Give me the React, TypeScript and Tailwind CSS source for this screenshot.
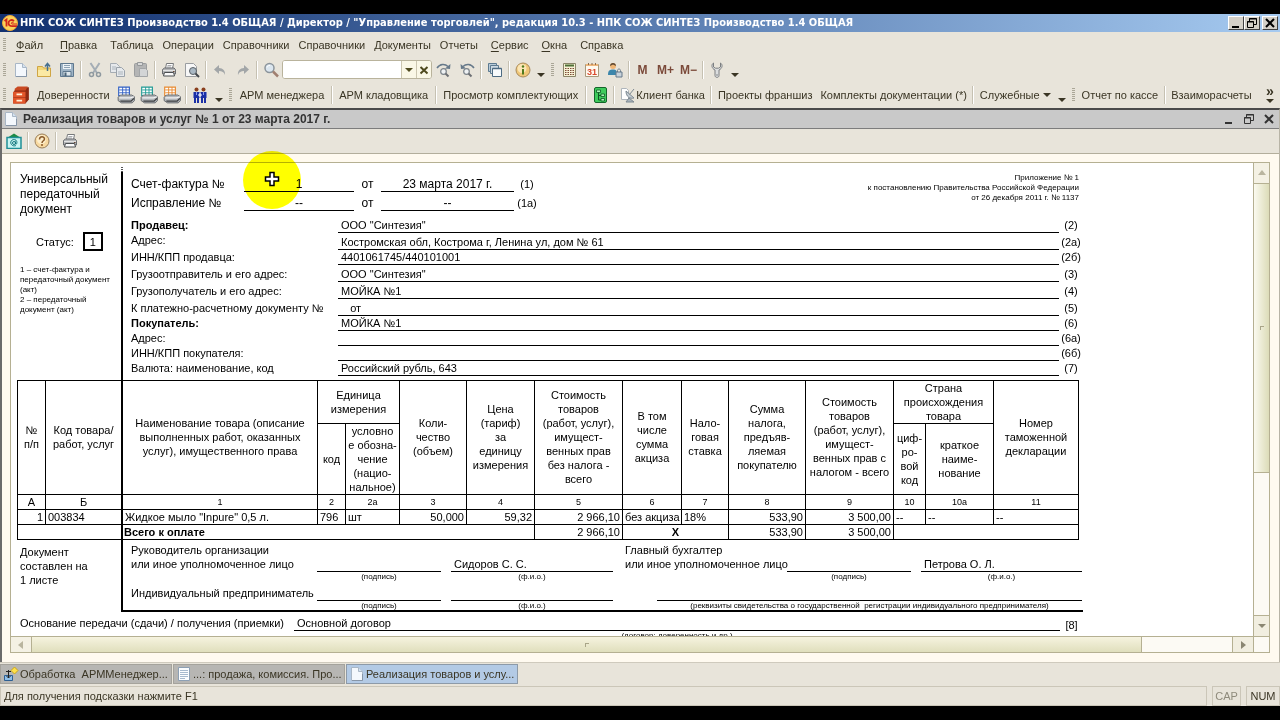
import type { ReactNode } from 'react'

type IconProps = { children: ReactNode; size?: number }

function Svg({ children, size = 16 }: IconProps) {
  return (
    <svg width={size} height={size} viewBox="0 0 16 16" fill="none" aria-hidden="true" className="shrink-0">
      {children}
    </svg>
  )
}

const PageIcon = () => (
  <Svg>
    <path d="M2.500 1.500h7l4 4v9h-11z" fill="#f4f8fd" stroke="#a9b7c6" />
    <path d="M9.500 1.500v4h4" fill="#d5e2f0" stroke="#a9b7c6" />
    <path d="M3 14.500h10.500V8" stroke="#8796a8" />
  </Svg>
)

const OpenIcon = () => (
  <Svg>
    <path d="M1.500 4.500h5l1 1.500h7v8.500h-13z" fill="#f4d878" stroke="#cfa545" />
    <path d="M2 8h12v6H2z" fill="#fbe9a4" />
    <path d="M11.500 9V2M9 4.500L11.500 1.500 14 4.500" stroke="#47708f" strokeWidth="1.500" />
  </Svg>
)

const SaveIcon = () => (
  <Svg>
    <path d="M1.500 1.500h13v13h-13z" fill="#9fb4c6" stroke="#5f788e" />
    <path d="M4 2h8v5H4z" fill="#edf3f7" />
    <path d="M5 3.500h6M5 5.500h6" stroke="#8da2b4" />
    <path d="M4 9.500h8V14H4z" fill="#dde6ec" stroke="#5f788e" />
    <path d="M5.500 10.500h2V14h-2z" fill="#4b6478" />
  </Svg>
)

const CutIcon = () => (
  <Svg>
    <path d="M3.500 1l6.500 10M12.500 1L6 11" stroke="#a4adb5" strokeWidth="2" />
    <circle cx="4.500" cy="12.500" r="2" stroke="#8f999f" strokeWidth="1.500" />
    <circle cx="11.500" cy="12.500" r="2" stroke="#8f999f" strokeWidth="1.500" />
  </Svg>
)

const CopyIcon = () => (
  <Svg>
    <path d="M.5 1.500h6l3 3v6h-9z" fill="#e6e9ec" stroke="#a5acb3" />
    <path d="M6.500 5.500h5l3 3v6h-8z" fill="#e6e9ec" stroke="#9aa2aa" />
    <path d="M2 5h4M2 7h4M8 10h5M8 12h5" stroke="#abb4bc" />
  </Svg>
)

const PasteIcon = () => (
  <Svg>
    <rect x="1.500" y="1.500" width="12" height="13" rx="1" fill="#b4b5b5" stroke="#9b9d9e" />
    <path d="M4.500 .5h5v3h-5z" fill="#d8d9d9" stroke="#95989a" />
    <path d="M6.500 6.500h6l2 2v6h-8z" fill="#d3d5d6" stroke="#a2a5a7" />
  </Svg>
)

const PrintIcon = () => (
  <Svg>
    <path d="M4.500 6.500l1-5h7l-1 5z" fill="#fff" stroke="#77797b" />
    <path d="M6.500 3.500h4M6 5h4" stroke="#a9abad" />
    <path d="M1.500 7.500l2-1.500h9.500l1.500 1.500v4.500h-13z" fill="#b3b5b7" stroke="#6a6d70" />
    <path d="M2 8.500h12" stroke="#e4e4e4" />
    <path d="M3.500 10.500h9l1 3.500h-11z" fill="#fafafa" stroke="#4b4e51" />
    <path d="M12 9.500h1.500" stroke="#6b4b37" />
  </Svg>
)

const PreviewIcon = () => (
  <Svg>
    <path d="M1.500 1.500h8l3 3v10h-11z" fill="#f7f7f7" stroke="#9a9da0" />
    <circle cx="9" cy="9" r="3.500" fill="#a9b8c4" stroke="#5b6268" />
    <path d="M11.500 11.500l3.500 3.500" stroke="#44494d" strokeWidth="2" />
  </Svg>
)

const ArrowIcon = ({ flip }: { flip?: boolean }) => (
  <Svg>
    <path
      d={flip ? 'M9 3l5 4.500-5 4.500V9C6 9 4 10 3 13c-.500-4 2-7 6-7z' : 'M7 3L2 7.500 7 12V9c3 0 5 1 6 4 .500-4-2-7-6-7z'}
      fill="#a2a6a8"
    />
  </Svg>
)

const SearchIcon = () => (
  <Svg>
    <circle cx="6.500" cy="6" r="4.500" fill="#dbe6ef" stroke="#8b949b" strokeWidth="1.500" />
    <path d="M4 5.500c.500-1.500 1.500-2 3-2" stroke="#fff" />
    <path d="M10 9.500l5 5" stroke="#a07f70" strokeWidth="2.500" />
  </Svg>
)

const FindStepIcon = ({ back }: { back?: boolean }) => (
  <Svg>
    <path d={back ? 'M15 6C12 1.500 7 1.500 4 4.500' : 'M1 6C4 1.500 9 1.500 12 4.500'} stroke="#66798a" strokeWidth="1.500" />
    <path d={back ? 'M1.500 2l.500 5 5-.500z' : 'M14.500 2l-.500 5-5-.500z'} fill="#66798a" />
    <circle cx="7.500" cy="9.500" r="2.800" fill="#eef1f3" stroke="#7b838a" strokeWidth="1.200" />
    <path d="M9.500 11.500l3 3" stroke="#6c6f73" strokeWidth="2" />
  </Svg>
)

const WindowsIcon = () => (
  <Svg>
    <path d="M1.500 1.500h8v8h-8z" fill="#b9cbd8" stroke="#5c7a90" />
    <path d="M3.500 3.500h8v8h-8z" fill="#cddae4" stroke="#5c7a90" />
    <path d="M5.500 6.500h9v8h-9z" fill="#f7fafc" stroke="#4d6b82" />
    <path d="M5.500 6.500h9" stroke="#4d6b82" strokeWidth="1.500" />
  </Svg>
)

const InfoIcon = () => (
  <Svg>
    <circle cx="8" cy="8" r="7" fill="#f0c777" stroke="#a88a5c" />
    <circle cx="7" cy="6.500" r="4.500" fill="#fbe6b6" />
    <path d="M8 7v5.500" stroke="#4f7a1e" strokeWidth="2" />
    <circle cx="8" cy="4.500" r="1.200" fill="#4f7a1e" />
  </Svg>
)

const CalcIcon = () => (
  <Svg>
    <path d="M2.500 1.500h12v13h-12z" fill="#f6f1d4" stroke="#8a8568" />
    <path d="M4 3.500h9" stroke="#4d6e35" strokeWidth="2" />
    <path d="M4 6.500h9M4 8.500h9M4 10.500h9M4 12.500h9" stroke="#7c4b38" strokeDasharray="1.500 1" />
  </Svg>
)

const CalendarIcon = () => (
  <Svg>
    <path d="M1.500 2.500h13v12h-13z" fill="#fffaf0" stroke="#a89a7c" />
    <path d="M2 3h12" stroke="#efb77c" strokeWidth="2" />
    <path d="M4.500 1v2M8 1v2M11.500 1v2" stroke="#8a6d4c" />
    <text x="8" y="13" textAnchor="middle" fontSize="9" fontWeight="700" fontFamily="Liberation Sans, sans-serif" fill="#d8482c">
      31
    </text>
  </Svg>
)

const UserLockIcon = () => (
  <Svg>
    <circle cx="6" cy="4" r="3" fill="#f0b676" />
    <path d="M3 4c0-4 6-4 6 0L6 2.500z" fill="#5a4632" />
    <path d="M1 13c0-5 2-5.500 5-5.500s4 1 4 5.500z" fill="#3c86ab" />
    <path d="M10.500 10V8.500c0-2 3-2 3 0V10" stroke="#6f7f8c" />
    <path d="M9 10h6v5H9z" fill="#c9d3db" stroke="#65788a" />
  </Svg>
)

const WrenchIcon = () => (
  <Svg>
    <path
      d="M4.500 1C2 2.500 2.500 6.500 6 8v5.500c0 2.500 4 2.500 4 0V8c3.500-1.500 4-5.500 1.500-7v4l-2 1.200h-3L4.500 5z"
      fill="#dcdedf"
      stroke="#7c7f81"
    />
    <circle cx="8" cy="13" r=".8" fill="#7c7f81" />
  </Svg>
)

const CardfileIcon = () => (
  <Svg size={18}>
    <path d="M3 3l3-2h9v11l-3 3.500H1V6z" fill="#8e2a12" />
    <path d="M1 5h11v5H1zM1 10.500h11v5H1z" fill="#e2562a" />
    <path d="M3 2l2-1.500h9L12 4H2z" fill="#c94a22" />
    <path d="M4 7.500h5M4 13h5" stroke="#fff0d8" strokeWidth="1.500" />
  </Svg>
)

const FormPrinterIcon = ({ color }: { color: string }) => (
  <Svg size={18}>
    <path d="M1.500 1h9.500v7.500H1.500z" fill="#fff" stroke={color} />
    <path d="M2 3.500h9M2 6h9M5 1v7M8 1v7" stroke={color} strokeWidth=".8" />
    <path d="M1 10l2-2h10l2.500 1.500V13l-2 2H4l-3-2z" fill="#b3b6ba" stroke="#63666a" strokeWidth=".8" />
    <path d="M2 10.500h10l3-1" stroke="#f4f4f4" />
    <path d="M3 13.500h9.500l2.500-2.500" stroke="#3c3e40" strokeWidth="1.200" />
  </Svg>
)

const PeopleIcon = () => (
  <Svg>
    <circle cx="4.500" cy="2.500" r="2" fill="#8a3f1d" />
    <circle cx="11.500" cy="2.500" r="2" fill="#8a3f1d" />
    <path d="M1.500 5h6v6H7v5H5V11H4v5H2v-5h-.500zM8.500 5h6v6H14v5h-2v-5h-1v5H9v-5h-.500z" fill="#1b2fa6" />
    <path d="M8 6v4M6 8h4" stroke="#fff" />
    <path d="M4.500 5v3M11.500 5v3" stroke="#8b9cf0" />
  </Svg>
)

const TreeIcon = () => (
  <Svg>
    <rect x="2.500" y=".5" width="12" height="15" rx="1.500" fill="#3fcb5c" stroke="#14662a" />
    <path d="M4.500 3h4v2.500h-4zM9 7h3.500v2.500H9zM9 11.500h3.500V14H9z" fill="#a8f5b4" stroke="#0e5a23" strokeWidth=".8" />
    <path d="M6.500 5.500v7.500H9M6.500 8.500H9" stroke="#0e5a23" />
  </Svg>
)

const DishIcon = () => (
  <Svg>
    <path d="M1.500 1.500h5l2 2v9h-7z" fill="#fff" stroke="#aeb5bb" />
    <path d="M6 4c0 6 4 8 8 7z" fill="#c3ccd3" stroke="#7d8992" />
    <path d="M9.500 7.500L14 2M9 11l-3 4h8z" stroke="#7d8992" fill="#a9b3bb" />
  </Svg>
)

const MailIcon = () => (
  <Svg>
    <path d="M1 5l7-4.500L15 5z" fill="#1c8a44" />
    <path d="M1 4.500h14v11H1z" fill="#c9f5f3" stroke="#1f8f96" strokeWidth="1.500" />
    <circle cx="8" cy="10" r="1.500" stroke="#12787e" />
    <path d="M9.500 8.500V11c1.500 1 2-2.500.500-3.800-4-2.500-7.500 2.600-3.500 5.300 1 .500 2.500.500 3.500 0" stroke="#12787e" />
  </Svg>
)

const HelpIcon = () => (
  <Svg>
    <circle cx="8" cy="8" r="7" fill="#f8d9a0" stroke="#9a7f5a" />
    <circle cx="7.500" cy="6.500" r="4.500" fill="#fdeecb" />
    <path d="M5.500 6.500c0-3.500 5-3.500 5-.500 0 1.800-2.500 1.700-2.500 4" stroke="#8a5a2a" strokeWidth="1.500" />
    <circle cx="8" cy="12" r="1" fill="#8a5a2a" />
  </Svg>
)

const ListPageIcon = () => (
  <Svg>
    <path d="M2.500 1.500h11v13h-11z" fill="#fbfdff" stroke="#8da0b4" />
    <path d="M4 4.500h8M4 6.500h8M4 8.500h8M4 10.500h8M4 12.500h5" stroke="#a7bace" />
  </Svg>
)

const ProcessIcon = () => (
  <Svg>
    <path d="M1.500 9.500h8v5h-8z" fill="#8fc0ea" stroke="#2d5f93" />
    <path d="M5.500 4v8M3.500 10l2 2 2-2M3 5.500h5" stroke="#222" />
    <path d="M11.500 1l3.500 3.500L11.500 8 8 4.500z" fill="#ffe14a" stroke="#c9a51e" />
  </Svg>
)

const LogoIcon = () => (
  <Svg size={16}>
    <circle cx="8" cy="8" r="7.500" fill="#fbd35a" stroke="#f0a93a" />
    <path d="M2.500 6l2-1.500v7" stroke="#d1261b" strokeWidth="1.800" />
    <path d="M12 6.200C9.500 3.800 6.500 5.500 6.500 8s2 3.200 4 3.200h4.500" stroke="#d1261b" strokeWidth="1.800" />
    <path d="M11.500 7.700c-2-1-3 .800-1.500 1.300h5" stroke="#d1261b" />
  </Svg>
)

const MinimizeGlyph = () => (
  <svg width="12" height="12" viewBox="0 0 12 12" aria-hidden="true">
    <path d="M2 9h7v2H2z" fill="currentColor" />
  </svg>
)

const RestoreGlyph = () => (
  <svg width="12" height="12" viewBox="0 0 12 12" fill="none" stroke="currentColor" aria-hidden="true">
    <path d="M3.500 4V1.500h7v6H8M3 2h8M1.500 4.500h6v6h-6zM1 5h7" />
  </svg>
)

const CloseGlyph = () => (
  <svg width="12" height="12" viewBox="0 0 12 12" fill="none" stroke="currentColor" strokeWidth="2" aria-hidden="true">
    <path d="M2 2l8 8M10 2l-8 8" />
  </svg>
)

function Triangle({ dir = 'down', color = '#3a3524' }: { dir?: 'down' | 'up' | 'left' | 'right'; color?: string }) {
  const paths = {
    down: 'M0 2h8L4 6z',
    up: 'M0 6h8L4 1z',
    left: 'M6 0v8L1 4z',
    right: 'M2 0v8l5-4z',
  }
  return (
    <svg width="8" height="8" viewBox="0 0 8 8" aria-hidden="true" className="shrink-0">
      <path d={paths[dir]} fill={color} />
    </svg>
  )
}

function Grip() {
  return (
    <div className="flex w-[9px] shrink-0 justify-center">
      <div className="h-[14px] w-[3px] bg-[repeating-linear-gradient(to_bottom,#aaa697_0px,#aaa697_1px,transparent_1px,transparent_2px)]" />
    </div>
  )
}

function Separator() {
  return (
    <div className="flex w-[5px] shrink-0 justify-center">
      <div className="h-[18px] w-px bg-[#c6c1b2]" />
      <div className="h-[18px] w-px bg-white" />
    </div>
  )
}

function IconButton({ label, children }: { label: string; children: ReactNode }) {
  return (
    <button type="button" aria-label={label} className="flex h-[22px] w-[23px] shrink-0 items-center justify-center">
      {children}
    </button>
  )
}

function MoreButton() {
  return (
    <button type="button" aria-label="Ещё" className="flex h-[18px] w-[14px] shrink-0 items-end justify-center">
      <Triangle />
    </button>
  )
}

function TextButton({ children, tight }: { children: ReactNode; tight?: boolean }) {
  return (
    <button type="button" className={`flex h-[22px] shrink-0 items-center whitespace-nowrap ${tight ? 'px-1' : 'px-[5px]'}`}>
      {children}
    </button>
  )
}

const menu = [
  { before: '', key: 'Ф', after: 'айл', space: 'mr-2' },
  { before: '', key: 'П', after: 'равка', space: 'mr-1' },
  { before: 'Таблица', key: '', after: '', space: '' },
  { before: 'Операции', key: '', after: '', space: '' },
  { before: 'Справочники', key: '', after: '', space: '' },
  { before: 'Справочники', key: '', after: '', space: '' },
  { before: 'Документы', key: '', after: '', space: '' },
  { before: 'Отчеты', key: '', after: '', space: 'mr-1' },
  { before: '', key: 'С', after: 'ервис', space: 'mr-1' },
  { before: '', key: 'О', after: 'кна', space: 'mr-1' },
  { before: 'Сп', key: 'р', after: 'авка', space: '' },
]

function TitleBar() {
  return (
    <header className="flex h-[18px] items-center bg-gradient-to-r from-[#12306f] to-[#a6caf0] px-[2px]">
      <LogoIcon />
      <h1 className="ml-[2px] flex-1 truncate font-['DejaVu_Sans_Condensed','DejaVu_Sans',sans-serif] font-bold text-white">
        НПК СОЖ СИНТЕЗ Производство 1.4 ОБЩАЯ / Директор / "Управление торговлей", редакция 10.3 - НПК СОЖ СИНТЕЗ Производство 1.4 ОБЩАЯ
      </h1>
      {[
        { label: 'Свернуть', glyph: <MinimizeGlyph />, space: '' },
        { label: 'Восстановить', glyph: <RestoreGlyph />, space: 'mr-[2px]' },
        { label: 'Закрыть', glyph: <CloseGlyph />, space: '' },
      ].map((b) => (
        <button
          key={b.label}
          type="button"
          aria-label={b.label}
          className={`flex h-[14px] w-4 items-center justify-center border border-t-white border-r-[#404040] border-b-[#404040] border-l-white bg-[#d4d0c8] text-black ${b.space}`}
        >
          {b.glyph}
        </button>
      ))}
    </header>
  )
}

function MenuBar() {
  return (
    <nav className="flex h-[25px] items-center">
      <Grip />
      <div className="flex gap-px pl-[3px]">
        {menu.map((m, i) => (
          <button key={i} type="button" className={`px-1 whitespace-nowrap ${m.space}`}>
            {m.before}
            <span className="underline underline-offset-2">{m.key}</span>
            {m.after}
          </button>
        ))}
      </div>
    </nav>
  )
}

function MainToolbar() {
  return (
    <div className="flex h-[25px] items-center">
      <Grip />
      <IconButton label="Новый"><PageIcon /></IconButton>
      <IconButton label="Открыть"><OpenIcon /></IconButton>
      <IconButton label="Сохранить"><SaveIcon /></IconButton>
      <Separator />
      <IconButton label="Вырезать"><CutIcon /></IconButton>
      <IconButton label="Копировать"><CopyIcon /></IconButton>
      <IconButton label="Вставить"><PasteIcon /></IconButton>
      <Separator />
      <IconButton label="Печать"><PrintIcon /></IconButton>
      <IconButton label="Просмотр"><PreviewIcon /></IconButton>
      <Separator />
      <IconButton label="Отменить"><ArrowIcon /></IconButton>
      <IconButton label="Вернуть"><ArrowIcon flip /></IconButton>
      <Separator />
      <IconButton label="Найти"><SearchIcon /></IconButton>
      <div className="flex h-[19px] w-[150px] shrink-0 overflow-hidden rounded-[3px] border border-[#b9b39c] bg-white">
        <input type="text" aria-label="Строка поиска" className="min-w-0 flex-1 bg-white px-1 outline-none" />
        <button type="button" aria-label="Список" className="flex w-[15px] items-center justify-center border-l border-[#ccc6b0] bg-[#faf7e6]">
          <Triangle color="#4f4a1e" />
        </button>
        <button type="button" aria-label="Очистить" className="flex w-[15px] items-center justify-center border-l border-[#ccc6b0] bg-[#faf7e6] text-[#4f4a1e]">
          <svg width="10" height="10" viewBox="0 0 10 10" fill="none" stroke="currentColor" strokeWidth="2" aria-hidden="true">
            <path d="M1.500 2l7 6.500M8.500 2l-7 6.500" />
          </svg>
        </button>
      </div>
      <IconButton label="Найти далее"><FindStepIcon /></IconButton>
      <IconButton label="Найти ранее"><FindStepIcon back /></IconButton>
      <Separator />
      <IconButton label="Окна"><WindowsIcon /></IconButton>
      <Separator />
      <IconButton label="Сведения"><InfoIcon /></IconButton>
      <MoreButton />
      <Grip />
      <IconButton label="Калькулятор"><CalcIcon /></IconButton>
      <IconButton label="Календарь"><CalendarIcon /></IconButton>
      <IconButton label="Пользователь"><UserLockIcon /></IconButton>
      <Separator />
      {['M', 'M+', 'M−'].map((m) => (
        <button key={m} type="button" className="h-[22px] w-[23px] shrink-0 text-[12px] font-bold text-[#7b4a3a]">
          {m}
        </button>
      ))}
      <Separator />
      <IconButton label="Настройка"><WrenchIcon /></IconButton>
      <MoreButton />
    </div>
  )
}

function CommandToolbar() {
  return (
    <div className="flex h-[26px] items-center">
      <Grip />
      <IconButton label="Картотека"><CardfileIcon /></IconButton>
      <TextButton>Доверенности</TextButton>
      <IconButton label="Печать формы"><FormPrinterIcon color="#2f5fc4" /></IconButton>
      <IconButton label="Печать реестра"><FormPrinterIcon color="#1f9a94" /></IconButton>
      <IconButton label="Печать ценников"><FormPrinterIcon color="#e8892f" /></IconButton>
      <Separator />
      <IconButton label="Контрагенты"><PeopleIcon /></IconButton>
      <MoreButton />
      <Grip />
      <TextButton>АРМ менеджера</TextButton>
      <Separator />
      <TextButton>АРМ кладовщика</TextButton>
      <Separator />
      <TextButton>Просмотр комплектующих</TextButton>
      <Separator />
      <IconButton label="Структура"><TreeIcon /></IconButton>
      <Separator />
      <TextButton tight>
        <DishIcon />
        Клиент банка
      </TextButton>
      <Separator />
      <TextButton tight>Проекты франшиз</TextButton>
      <TextButton tight>Комплекты документации (*)</TextButton>
      <Separator />
      <TextButton tight>
        Служебные
        <span className="ml-[3px]">
          <Triangle />
        </span>
      </TextButton>
      <MoreButton />
      <Grip />
      <TextButton tight>Отчет по кассе</TextButton>
      <Separator />
      <TextButton tight>Взаиморасчеты</TextButton>
      <button type="button" aria-label="Другие команды" className="ml-auto flex w-[20px] shrink-0 flex-col items-center font-bold">
        <span className="text-[14px] leading-[12px]">»</span>
        <Triangle />
      </button>
    </div>
  )
}

type Requisite = { label: string; value: string; no: string; height: string; bold?: boolean; raised?: boolean }

const requisites: Requisite[] = [
  { label: 'Продавец:', value: 'ООО "Синтезия"', no: '(2)', height: 'h-[22px]', bold: true },
  { label: 'Адрес:', value: 'Костромская обл, Кострома г, Ленина ул, дом № 61', no: '(2а)', height: 'h-[17px]', raised: true },
  { label: 'ИНН/КПП продавца:', value: '4401061745/440101001', no: '(2б)', height: 'h-[15px]' },
  { label: 'Грузоотправитель и его адрес:', value: 'ООО "Синтезия"', no: '(3)', height: 'h-[17px]' },
  { label: 'Грузополучатель и его адрес:', value: 'МОЙКА №1', no: '(4)', height: 'h-[17px]' },
  { label: 'К платежно-расчетному документу №', value: '   от', no: '(5)', height: 'h-[17px]' },
  { label: 'Покупатель:', value: 'МОЙКА №1', no: '(6)', height: 'h-[15px]', bold: true },
  { label: 'Адрес:', value: '', no: '(6а)', height: 'h-[15px]' },
  { label: 'ИНН/КПП покупателя:', value: '', no: '(6б)', height: 'h-[15px]' },
  { label: 'Валюта: наименование, код', value: 'Российский рубль, 643', no: '(7)', height: 'h-[15px]' },
]

function InvoiceLine({ label, number, date, mark }: { label: string; number: string; date: string; mark: string }) {
  return (
    <div className="flex h-[19px] items-end text-[12px] leading-[15px]">
      <span className="w-[113px]">{label}</span>
      <span className="h-[15px] w-[110px] border-b border-black text-center">{number}</span>
      <span className="w-[27px] text-center">от</span>
      <span className="h-[15px] w-[133px] border-b border-black text-center">{date}</span>
      <span className="w-[26px] text-center text-[11px]">{mark}</span>
    </div>
  )
}

function DocumentHead() {
  return (
    <section className="flex">
      <div className="w-[104px] shrink-0 pl-[3px]">
        <p className="text-[12px] leading-[15px] whitespace-pre-line">{'Универсальный\nпередаточный\nдокумент'}</p>
        <p className="mt-[15px] flex items-center gap-[9px] pl-4">
          Статус:
          <span className="flex h-[19px] w-5 items-center justify-center border-2 border-black">1</span>
        </p>
        <p className="mt-[14px] text-[8px] leading-[10px] whitespace-pre-line">
          {'1 – счет-фактура и\nпередаточный документ\n(акт)\n2 – передаточный\nдокумент (акт)'}
        </p>
      </div>
      <div className="flex-1 border-l-2 border-black pb-1 pl-2">
        <div className="flex justify-between">
          <div className="pt-px">
            <InvoiceLine label="Счет-фактура №" number="1" date="23 марта 2017 г." mark="(1)" />
            <InvoiceLine label="Исправление №" number="--" date="--" mark="(1а)" />
          </div>
          <p className="pt-px pr-1 text-right text-[8px] leading-[10px] whitespace-pre-line">
            {'Приложение № 1\nк постановлению Правительства Российской Федерации\nот 26 декабря 2011 г. № 1137'}
          </p>
        </div>
        <dl>
          {requisites.map((r) => (
            <div key={r.no} className={`flex items-end ${r.height}`}>
              <dt className={`w-[207px] pb-px whitespace-nowrap ${r.raised ? 'self-start' : ''} ${r.bold ? 'font-bold' : ''}`}>
                {r.label}
              </dt>
              <dd className="h-[15px] flex-1 border-b border-black pl-[3px] whitespace-pre">{r.value}</dd>
              <dd className="w-6 pb-px text-center">{r.no}</dd>
            </div>
          ))}
        </dl>
      </div>
    </section>
  )
}

const columnWidths = [
  'w-[28px]', 'w-[77px]', 'w-[195px]', 'w-[28px]', 'w-[54px]', 'w-[67px]', 'w-[68px]', 'w-[88px]',
  'w-[59px]', 'w-[47px]', 'w-[77px]', 'w-[88px]', 'w-[32px]', 'w-[68px]', 'w-[85px]',
]

const headCells = [
  { text: '№\nп/п', rows: 2, cols: 1 },
  { text: 'Код товара/\nработ, услуг', rows: 2, cols: 1, thick: true },
  { text: 'Наименование товара (описание\nвыполненных работ, оказанных\nуслуг), имущественного права', rows: 2, cols: 1 },
  { text: 'Единица\nизмерения', rows: 1, cols: 2 },
  { text: 'Коли-\nчество\n(объем)', rows: 2, cols: 1 },
  { text: 'Цена\n(тариф)\nза\nединицу\nизмерения', rows: 2, cols: 1 },
  { text: 'Стоимость\nтоваров\n(работ, услуг),\nимущест-\nвенных прав\nбез налога -\nвсего', rows: 2, cols: 1 },
  { text: 'В том\nчисле\nсумма\nакциза', rows: 2, cols: 1 },
  { text: 'Нало-\nговая\nставка', rows: 2, cols: 1 },
  { text: 'Сумма\nналога,\nпредъяв-\nляемая\nпокупателю', rows: 2, cols: 1 },
  { text: 'Стоимость\nтоваров\n(работ, услуг),\nимущест-\nвенных прав с\nналогом - всего', rows: 2, cols: 1 },
  { text: 'Страна\nпроисхождения\nтовара', rows: 1, cols: 2 },
  { text: 'Номер\nтаможенной\nдекларации', rows: 2, cols: 1 },
]

const subHeadCells = ['код', 'условно\nе обозна-\nчение\n(нацио-\nнальное)', 'циф-\nро-\nвой\nкод', 'краткое\nнаиме-\nнование']

const columnNumbers = ['А', 'Б', '1', '2', '2а', '3', '4', '5', '6', '7', '8', '9', '10', '10а', '11']

const goods = [
  { text: '1', right: true },
  { text: '003834' },
  { text: 'Жидкое мыло "Inpure" 0,5 л.' },
  { text: '796' },
  { text: 'шт' },
  { text: '50,000', right: true },
  { text: '59,32', right: true },
  { text: '2 966,10', right: true },
  { text: 'без акциза' },
  { text: '18%' },
  { text: '533,90', right: true },
  { text: '3 500,00', right: true },
  { text: '--' },
  { text: '--' },
  { text: '--' },
]

function GoodsTable() {
  return (
    <table className="w-[1062px] table-fixed border-separate border-spacing-0 border-t border-l border-black leading-[14px] [&_td]:border-r [&_td]:border-b [&_td]:border-black [&_td]:whitespace-nowrap [&_th]:border-r [&_th]:border-b [&_th]:border-black [&_th]:font-normal [&_th]:whitespace-pre">
      <colgroup>
        {columnWidths.map((w, i) => (
          <col key={i} className={w} />
        ))}
      </colgroup>
      <thead>
        <tr className="h-[43px]">
          {headCells.map((c) => (
            <th
              key={c.text}
              rowSpan={c.rows}
              colSpan={c.cols}
              className={`${c.rows === 2 ? 'pb-[2px]' : ''} ${c.thick ? 'border-r-2!' : ''}`}
            >
              {c.text}
            </th>
          ))}
        </tr>
        <tr className="h-[71px]">
          {subHeadCells.map((c) => (
            <th key={c}>{c}</th>
          ))}
        </tr>
        <tr className="h-[15px]">
          {columnNumbers.map((n, i) => (
            <th key={n} className={i === 1 ? 'border-r-2!' : i > 1 ? 'text-[9px]' : ''}>
              {n}
            </th>
          ))}
        </tr>
      </thead>
      <tbody>
        <tr className="h-[15px]">
          {goods.map((g, i) => (
            <td key={i} className={`px-[2px] ${g.right ? 'text-right' : ''} ${i === 1 ? 'border-r-2!' : ''}`}>
              {g.text}
            </td>
          ))}
        </tr>
        <tr className="h-[15px]">
          <td colSpan={2} className="border-r-2!" />
          <td colSpan={5} className="px-px font-bold">Всего к оплате</td>
          <td className="px-[2px] text-right">2 966,10</td>
          <td colSpan={2} className="text-center font-bold">Х</td>
          <td className="px-[2px] text-right">533,90</td>
          <td className="px-[2px] text-right">3 500,00</td>
          <td colSpan={3} />
        </tr>
      </tbody>
    </table>
  )
}

function SignField({ width, value, caption }: { width: string; value?: string; caption: string }) {
  return (
    <div className={`shrink-0 ${width}`}>
      <div className="h-[15px] border-b border-black pl-[3px]">{value}</div>
      <div className="text-center text-[8px] leading-[10px] whitespace-pre">{caption}</div>
    </div>
  )
}

function Signatures() {
  return (
    <section className="flex">
      <p className="w-[104px] shrink-0 pt-[5px] pl-[3px] whitespace-pre-line">{'Документ\nсоставлен на\n1 листе'}</p>
      <div className="h-[72px] flex-1 border-b-2 border-l-2 border-black pt-[3px] pl-2">
        <div className="flex h-[14px]">
          <span className="w-[494px]">Руководитель организации</span>
          <span>Главный бухгалтер</span>
        </div>
        <div className="flex h-[29px]">
          <span className="w-[186px] shrink-0">или иное уполномоченное лицо</span>
          <SignField width="w-[124px]" caption="(подпись)" />
          <span className="w-[10px] shrink-0" />
          <SignField width="w-[162px]" value="Сидоров С. С." caption="(ф.и.о.)" />
          <span className="w-3 shrink-0" />
          <span className="w-[162px] shrink-0 whitespace-nowrap">или иное уполномоченное лицо</span>
          <SignField width="w-[124px]" caption="(подпись)" />
          <span className="w-[10px] shrink-0" />
          <SignField width="w-[161px]" value="Петрова О. Л." caption="(ф.и.о.)" />
        </div>
        <div className="flex">
          <span className="w-[186px] shrink-0 whitespace-nowrap">Индивидуальный предприниматель</span>
          <SignField width="w-[124px]" caption="(подпись)" />
          <span className="w-[10px] shrink-0" />
          <SignField width="w-[162px]" caption="(ф.и.о.)" />
          <span className="w-11 shrink-0" />
          <SignField
            width="w-[425px]"
            caption="(реквизиты свидетельства о государственной  регистрации индивидуального предпринимателя)"
          />
        </div>
      </div>
    </section>
  )
}

function TransferBasis() {
  return (
    <section className="flex pt-1 pl-[3px]">
      <span className="w-[274px] shrink-0 whitespace-nowrap">Основание передачи (сдачи) / получения (приемки)</span>
      <SignField width="w-[766px]" value="Основной договор" caption="(договор; доверенность и др.)" />
      <span className="w-6 pt-[2px] text-center">[8]</span>
    </section>
  )
}

function VerticalScroll() {
  return (
    <div className="flex w-4 shrink-0 flex-col border-l border-[#b5b092] bg-[#fcfaf4]">
      <button type="button" aria-label="Вверх" className="flex h-[21px] items-center justify-center border-b border-[#b5b092] bg-[#f4f1e4]">
        <Triangle dir="up" color="#b9b59f" />
      </button>
      <div className="flex h-[289px] items-center justify-center border-b border-[#b5b092] bg-gradient-to-r from-[#fbfaf0] to-[#dcdcb8]">
        <div className="h-1 w-1 border-t border-l border-[#a9a588]" />
      </div>
      <div className="flex-1" />
      <button type="button" aria-label="Вниз" className="flex h-[21px] items-center justify-center border-t border-[#b5b092] bg-[#f1eee0]">
        <Triangle dir="down" color="#8a8672" />
      </button>
    </div>
  )
}

function HorizontalScroll() {
  return (
    <div className="flex h-4 shrink-0 border-t border-[#b5b092] bg-[#fcfaf4]">
      <button type="button" aria-label="Влево" className="flex w-[21px] items-center justify-center border-r border-[#b5b092] bg-[#f4f1e4]">
        <Triangle dir="left" color="#b9b59f" />
      </button>
      <div className="flex flex-1">
        <div className="flex w-[92.5%] items-center justify-center border-r border-[#b5b092] bg-gradient-to-b from-[#f6f3df] to-[#e0dfbd]">
          <div className="h-1 w-1 border-t border-l border-[#a9a588]" />
        </div>
      </div>
      <button type="button" aria-label="Вправо" className="flex w-[21px] items-center justify-center border-l border-[#b5b092] bg-[#f1eee0]">
        <Triangle dir="right" color="#8a8672" />
      </button>
      <div className="w-4 border-l border-[#b5b092]" />
    </div>
  )
}

function Pointer() {
  return (
    <div className="pointer-events-none absolute -top-[3px] left-[241px] size-[58px] mix-blend-multiply">
      <div className="size-full rounded-full bg-[#ffff00]" />
    </div>
  )
}

function PointerCross() {
  return (
    <svg width="16" height="16" viewBox="0 0 16 16" className="pointer-events-none absolute top-[17px] left-[262px]" aria-hidden="true">
      <path d="M6 1.500h4v4.500h4.500v4H10v4.500H6V10H1.500V6H6z" fill="#fff" stroke="#000" strokeWidth="1.500" />
    </svg>
  )
}

function DocumentWindow() {
  return (
    <main className="flex min-h-0 flex-1 flex-col border-t-2 border-r border-l-2 border-t-[#4a4a4a] border-r-[#b8b4a6] border-l-[#6b6b6b]">
      <div className="flex h-[19px] shrink-0 items-center border-b border-[#7d7d7d] bg-[#c9c9c9] pl-px text-[#333]">
        <PageIcon />
        <h2 className="ml-1 flex-1 text-[12px] font-bold">Реализация товаров и услуг № 1 от 23 марта 2017 г.</h2>
        <button type="button" aria-label="Свернуть документ" className="flex w-5 justify-center"><MinimizeGlyph /></button>
        <button type="button" aria-label="Восстановить документ" className="flex w-5 justify-center"><RestoreGlyph /></button>
        <button type="button" aria-label="Закрыть документ" className="flex w-5 justify-center"><CloseGlyph /></button>
      </div>
      <div className="flex h-[25px] shrink-0 items-center border-b border-[#b3ae9c]">
        <IconButton label="Отправить"><MailIcon /></IconButton>
        <Separator />
        <IconButton label="Справка"><HelpIcon /></IconButton>
        <Separator />
        <IconButton label="Печать документа"><PrintIcon /></IconButton>
      </div>
      <div className="relative flex min-h-0 flex-1 flex-col bg-[#fffaf0] pt-2 pr-[9px] pb-[9px] pl-2">
        <div className="flex min-h-0 flex-1 flex-col border border-[#b5b092] bg-white">
          <div className="flex min-h-0 flex-1">
            <div className="min-h-0 flex-1 overflow-hidden pl-[6px] text-[11px] leading-[14px] text-black">
              <div className="w-[1066px]">
                <div className="h-[9px] w-[106px] pt-1">
                  <div className="ml-auto h-[5px] w-[2px] bg-[repeating-linear-gradient(to_bottom,#555_0px,#555_1px,transparent_1px,transparent_2px)]" />
                </div>
                <DocumentHead />
                <GoodsTable />
                <Signatures />
                <TransferBasis />
              </div>
            </div>
            <VerticalScroll />
          </div>
          <HorizontalScroll />
        </div>
        <Pointer />
        <PointerCross />
      </div>
    </main>
  )
}

const windowTabs = [
  { icon: <ProcessIcon />, title: 'Обработка  АРММенеджер...', active: false },
  { icon: <ListPageIcon />, title: '...: продажа, комиссия. Про...', active: false },
  { icon: <PageIcon />, title: 'Реализация товаров и услу...', active: true },
]

function WindowTabs() {
  return (
    <div className="flex h-[24px] shrink-0 items-start gap-px border-t border-[#cfcabd] pt-px">
      {windowTabs.map((t) => (
        <button
          key={t.title}
          type="button"
          className={`flex h-[20px] w-[172px] items-center gap-px overflow-hidden border pl-[2px] text-left whitespace-pre ${
            t.active ? 'border-[#8d9aa8] bg-[#b3cae5]' : 'border-[#a5a39c] bg-[#b7b6b3]'
          }`}
        >
          {t.icon}
          {t.title}
        </button>
      ))}
    </div>
  )
}

function StatusBar() {
  return (
    <footer className="flex h-[20px] shrink-0 items-stretch gap-[5px] leading-[18px]">
      <span className="flex-1 border border-[#cbc6b8] pl-[3px]">Для получения подсказки нажмите F1</span>
      <span className="w-[29px] border border-[#cbc6b8] text-center text-[#8f8b7c]">CAP</span>
      <span className="w-[34px] border border-[#cbc6b8] text-center">NUM</span>
    </footer>
  )
}

export default function App() {
  return (
    <div className="h-screen overflow-hidden bg-black py-[14px] font-['Liberation_Sans',Arial,sans-serif] text-[11px] leading-[16px] text-[#3a3524]">
      <div className="flex h-full flex-col bg-[#e8e4da]">
        <TitleBar />
        <MenuBar />
        <MainToolbar />
        <CommandToolbar />
        <DocumentWindow />
        <WindowTabs />
        <StatusBar />
      </div>
    </div>
  )
}
